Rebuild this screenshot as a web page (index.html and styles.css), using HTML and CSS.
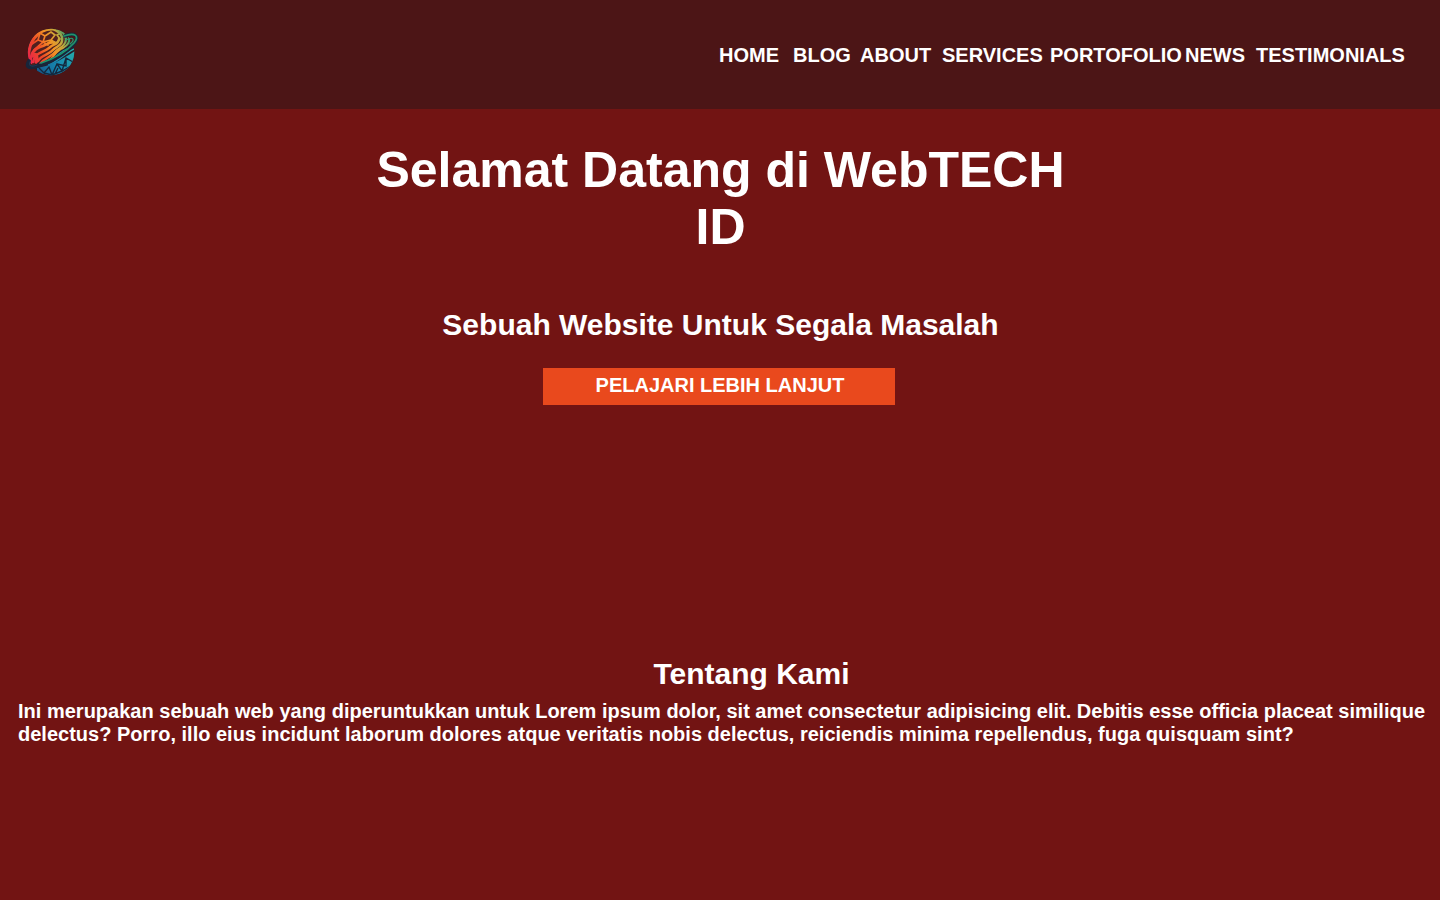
FILE: index.html
```html
<!DOCTYPE html>
<html lang="id">
<head>
<meta charset="utf-8">
<title>WebTECH ID</title>
<link rel="stylesheet" href="styles.css">
</head>
<body>
<header class="header">
  <a class="logo" href="#" aria-label="WebTECH ID">
    <svg viewBox="0 0 64 64" width="64" height="64">
      <defs>
        <linearGradient id="warm" gradientUnits="userSpaceOnUse" x1="8" y1="42" x2="54" y2="18">
          <stop offset="0" stop-color="#e8204f"/>
          <stop offset="0.3" stop-color="#ef4a26"/>
          <stop offset="0.55" stop-color="#f39325"/>
          <stop offset="0.74" stop-color="#c5a83a"/>
          <stop offset="0.9" stop-color="#36a06c"/>
          <stop offset="1" stop-color="#1ba184"/>
        </linearGradient>
        <linearGradient id="cool" gradientUnits="userSpaceOnUse" x1="20" y1="54" x2="54" y2="32">
          <stop offset="0" stop-color="#165a8d"/>
          <stop offset="0.5" stop-color="#1689b2"/>
          <stop offset="1" stop-color="#25a8aa"/>
        </linearGradient>
        <clipPath id="globe"><circle cx="31" cy="32" r="23.3"/></clipPath>
      </defs>
      <circle cx="31" cy="32" r="23.4" fill="#24202b"/>
      <g clip-path="url(#globe)">
        <path d="M7 50V7H55V23C43 22 35 28 29 35C23 42 16 42 11 48Z" fill="#50201f"/>
        <g fill="none" stroke="url(#warm)" stroke-linecap="round">
          <path d="M9 44C6 22 18 9 32 9" stroke-width="3"/>
          <path d="M11 43C10 34 14 29 20 27C28 25 30 20 35 23" stroke-width="2.7"/>
          <path d="M13 42C15 32 23 33 29 28C35 23 38 25 39 19" stroke-width="2.5"/>
          <path d="M18 41C22 34 28 36 34 29C39 25 43 25 42 17C41 13 38 11 33 9" stroke-width="2.5"/>
          <path d="M20 44C25 37 31 38 36 31C41 27 46 25 46 19C45 14 42 11 38 10" stroke-width="2.2"/>
          <path d="M27 42C34 38 36 30 43 28C48 25 50 22 49 18" stroke-width="2"/>
          <path d="M12 24 18 20 20 13 25 16 31 12 35 15 31 20 36 23 40 19 37 15 41 13M18 20 23 22 25 16M23 22 31 20M14 30 23 22 28 25" stroke-width="1.7"/>
          <path d="M13 36C16 32 18 37 16 42" stroke-width="3.4"/>
        </g>
        <path d="M17 48C29 46 40 41 55 31V60H17Z" fill="url(#cool)"/>
        <g fill="none" stroke="#14283d" stroke-width="1.4">
          <path d="M19 48 24 53 29 47 32 55 37 44 42 51 46 38 53 42M24 53 32 55 42 51 51 46M37 44 46 46 46 38M34 56 38 48"/>
        </g>
        <g fill="none" stroke="url(#cool)" stroke-width="1.4">
          <path d="M23 44C34 41 38 32 50 28M28 45C38 42 43 34 54 29"/>
        </g>
      </g>
      <g fill="none" stroke-linecap="round">
        <path d="M45 16C54 12 60 16 55 23C47 33 31 42 18 46C9 49 5 47 9 41" stroke="#18253a" stroke-width="3.6"/>
        <path d="M44 16C55 12 60 16 54 23C46 32 33 39 21 43" stroke="#20936d" stroke-width="1.8"/>
        <path d="M46 20C54 16 55 20 50 24" stroke="#279a74" stroke-width="1.2"/>
        <path d="M17 45C12 47 8 46 10 42" stroke="#1c3854" stroke-width="1.2"/>
      </g>
    </svg>
  </a>
  <nav class="nav">
    <a href="#">HOME</a><a href="#">BLOG</a><a href="#">ABOUT</a><a href="#">SERVICES</a><a href="#">PORTOFOLIO</a><a href="#">NEWS</a><a href="#">TESTIMONIALS</a>
  </nav>
</header>
<main>
  <section class="hero">
    <h1>Selamat Datang di WebTECH ID</h1>
    <h2>Sebuah Website Untuk Segala Masalah</h2>
    <a class="button" href="#">PELAJARI LEBIH LANJUT</a>
  </section>
  <section class="about">
    <h2>Tentang Kami</h2>
    <p>Ini merupakan sebuah web yang diperuntukkan untuk Lorem ipsum dolor, sit amet consectetur adipisicing elit. Debitis esse officia placeat similique delectus? Porro, illo eius incidunt laborum dolores atque veritatis nobis delectus, reiciendis minima repellendus, fuga quisquam sint?</p>
  </section>
</main>
</body>
</html>
```
FILE: styles.css
```css
* { box-sizing: border-box; margin: 0; padding: 0; }
body {
  height: 900px;
  overflow: hidden;
  background: #721413;
  color: #fff;
  font: bold 20px "Liberation Sans", Arial, sans-serif;
}
a { color: inherit; text-decoration: none; }
.header {
  display: flex;
  justify-content: space-between;
  height: 109px;
  padding: 20px 34px 0 20px;
  background: #4c1516;
}
.logo { width: 64px; height: 64px; }
.logo svg { display: block; }
.nav {
  display: grid;
  grid-template-columns: 74px 67px 82px 108px 135px 71px 150px;
  padding-top: 24px;
}
.hero {
  display: flex;
  flex-direction: column;
  align-items: center;
  height: 548px;
  padding-top: 33px;
  text-align: center;
}
.hero h1 { width: 720px; padding-left: 1px; font-size: 50px; line-height: 57px; }
.hero h2 { margin-top: 52px; padding-left: 1px; font-size: 30px; line-height: 34px; }
.button {
  width: 352px;
  height: 37px;
  margin: 26px 2px 0 0;
  padding: 6px 0 0 2px;
  background: #e9491d;
}
.about { padding: 0 12px 0 18px; }
.about h2 {
  padding-left: 57px;
  font-size: 30px;
  line-height: 34px;
  text-align: center;
}
.about p { margin-top: 9px; line-height: 23px; letter-spacing: 0.008px; }
```
